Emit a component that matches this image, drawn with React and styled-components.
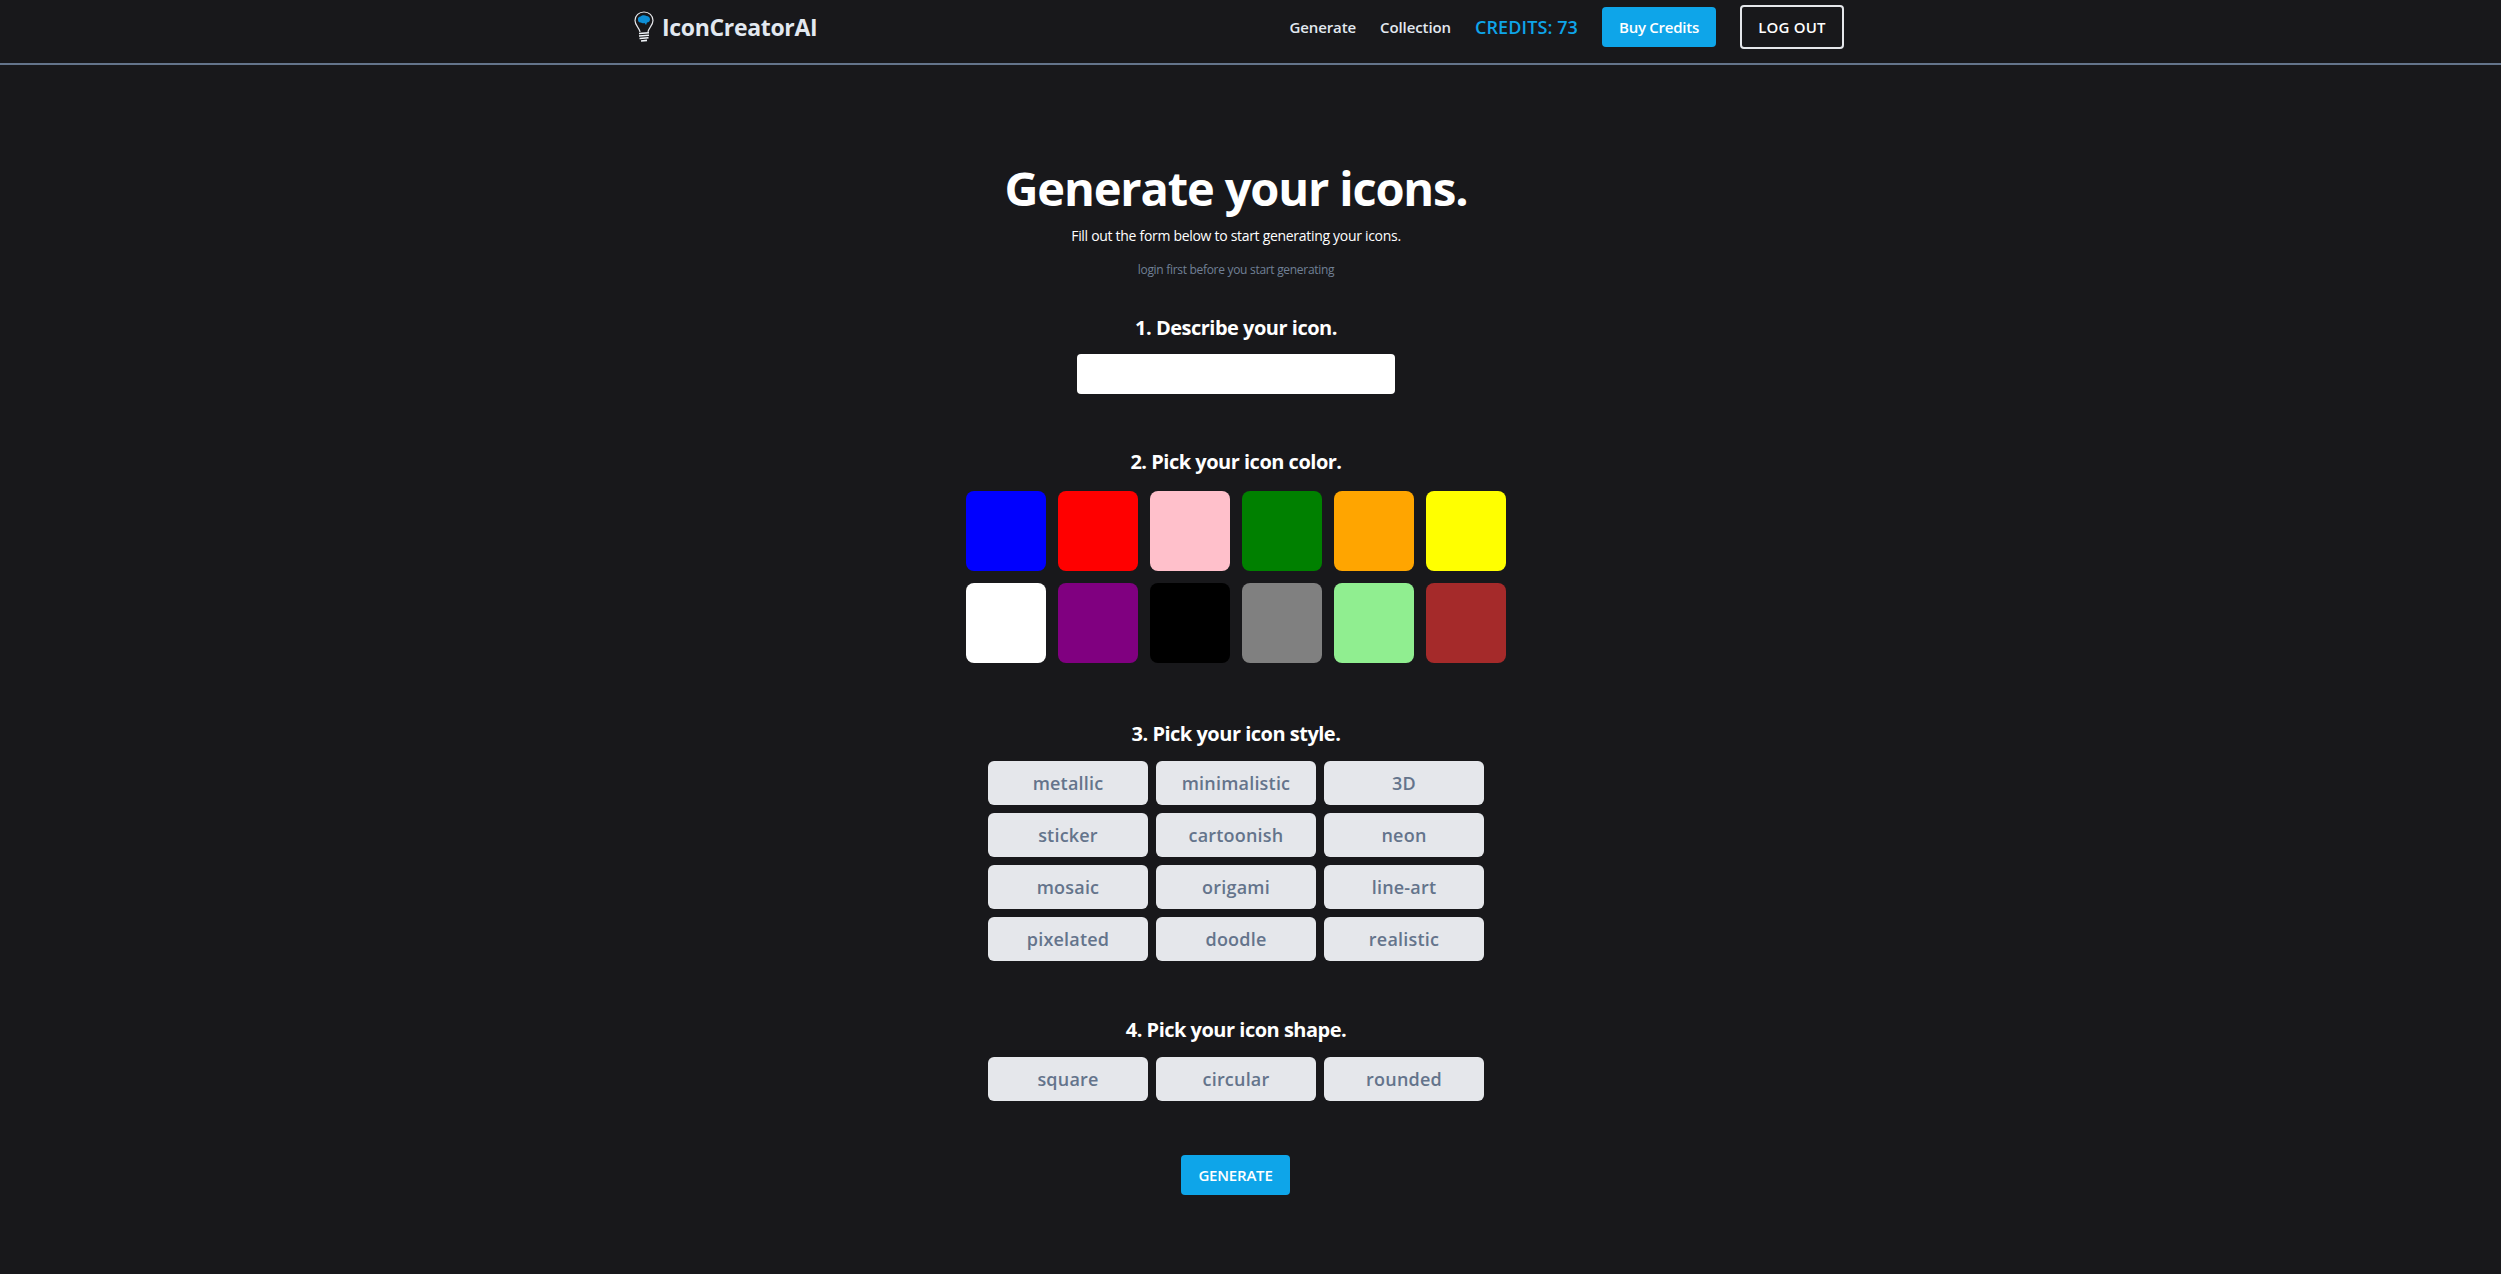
import React from "react";
import styled, { createGlobalStyle } from "styled-components";

const Global = createGlobalStyle`
  html, body { margin: 0; padding: 0; background: #18181b; }
  * { box-sizing: border-box; }
  body { font-family: "Open Sans", "Noto Sans", sans-serif; color: #fff; }
`;
const Page = styled.div`
  min-height: 1274px;
  background: #18181b;
  display: flex;
  flex-direction: column;
`;
const Header = styled.header`
  height: 65px;
  border-bottom: 2px solid #64748b;
  padding: 0 25px 9px 0;
`;
const HeaderInner = styled.div`
  width: 1212px;
  height: 100%;
  margin: 0 auto;
  display: flex;
  align-items: center;
  justify-content: space-between;
`;
const Logo = styled.div`
  display: flex;
  align-items: center;
  gap: 8px;
  padding-left: 2px;
  font-size: 23px;
  font-weight: 700;
  color: #e2e8f0;
  letter-spacing: -0.33px;
`;
const Nav = styled.nav`
  display: flex;
  align-items: center;
`;
const NavLink = styled.a`
  font-size: 15px;
  font-weight: 600;
  color: #e2e8f0;
  margin-right: 24px;
  letter-spacing: -0.1px;
`;
const Credits = styled.span`
  font-size: 18px;
  font-weight: 600;
  color: #0ea5e9;
  margin-right: 24px;
  letter-spacing: 0.1px;
`;
const BuyButton = styled.button`
  width: 114px;
  height: 40px;
  border: 0;
  border-radius: 4px;
  background: #0ea5e9;
  color: #fff;
  font: 600 15px "Open Sans", sans-serif;
  letter-spacing: -0.25px;
  margin-right: 24px;
`;
const LogoutButton = styled.button`
  width: 104px;
  height: 44px;
  border: 2px solid #e5e7eb;
  border-radius: 4px;
  background: transparent;
  color: #fff;
  font: 600 15px "Open Sans", sans-serif;
  letter-spacing: 0.2px;
`;
const Main = styled.main`
  padding: 93px 29px 0 0;
  display: flex;
  flex-direction: column;
  align-items: center;
`;
const Title = styled.h1`
  margin: 0;
  font-size: 47px;
  line-height: 60px;
  font-weight: 700;
  letter-spacing: -1.15px;
`;
const Sub = styled.p`
  margin: 8px 0 0;
  font-size: 14px;
  line-height: 20px;
  letter-spacing: -0.3px;
`;
const Hint = styled.p`
  margin: 14px 0 0;
  font-size: 12px;
  line-height: 20px;
  color: #718096;
  letter-spacing: -0.3px;
`;
const Label = styled.h2`
  margin: ${(p) => p.$top}px 0 0;
  font-size: 20px;
  line-height: 28px;
  font-weight: 700;
  letter-spacing: -0.5px;
`;
const TextField = styled.input`
  display: block;
  width: 318px;
  height: 40px;
  margin-top: 12px;
  border: 0;
  border-radius: 4px;
  background: #fff;
`;
const Swatches = styled.div`
  margin-top: 15px;
  display: grid;
  grid-template-columns: repeat(6, 80px);
  gap: 12px;
`;
const Swatch = styled.button`
  width: 80px;
  height: 80px;
  border: 0;
  border-radius: 8px;
  background: ${(p) => p.$color};
`;
const Options = styled.div`
  margin-top: 13px;
  display: grid;
  grid-template-columns: repeat(3, 160px);
  gap: 8px;
`;
const Option = styled.button`
  height: 44px;
  border: 0;
  border-radius: 6px;
  background: #e5e7eb;
  color: #64748b;
  font: 600 18px "Open Sans", sans-serif;
  letter-spacing: 0.2px;
`;
const GenerateButton = styled.button`
  margin: 54px 1px 0 0;
  width: 109px;
  height: 40px;
  border: 0;
  border-radius: 4px;
  background: #0ea5e9;
  color: #fff;
  font: 600 15px "Open Sans", sans-serif;
  letter-spacing: -0.2px;
`;

const BulbIcon = () => (
  <svg width="20" height="32" viewBox="0 0 20 32" fill="none">
    <path d="M6 21C5.500 17 1 14.500 1 9.500C1 4.500 5 1 10 1s9 3.500 9 8.500c0 5-4.500 7.500-5 11.500" stroke="#e5e7eb" strokeWidth="1.200" />
    <path d="M4 9c-.5-2 1-3.500 2.500-3.500C8 4 11 4 12.500 5c2 0 3.500 1.500 3.500 3.500 0 2-1.500 3-3 3l-1 2.500-1.500-2c-2 .5-3 0-3.500-.5C5.500 11.500 4 11 4 9z" fill="#0e8fd6" />
    <path d="M5 22.500l10-.8M5 25l10-.8M5.500 27.500l9-.8M7 30l6-.6" stroke="#f1f5f9" strokeWidth="1.600" />
  </svg>
);

const colors = ["blue", "red", "pink", "green", "orange", "yellow", "white", "purple", "black", "gray", "lightgreen", "brown"];
const styles = ["metallic", "minimalistic", "3D", "sticker", "cartoonish", "neon", "mosaic", "origami", "line-art", "pixelated", "doodle", "realistic"];
const shapes = ["square", "circular", "rounded"];

export default function App() {
  return (
    <Page>
      <Global />
      <Header>
        <HeaderInner>
          <Logo>
            <BulbIcon />
            IconCreatorAI
          </Logo>
          <Nav>
            <NavLink>Generate</NavLink>
            <NavLink>Collection</NavLink>
            <Credits>CREDITS: 73</Credits>
            <BuyButton>Buy Credits</BuyButton>
            <LogoutButton>LOG OUT</LogoutButton>
          </Nav>
        </HeaderInner>
      </Header>
      <Main>
        <Title>Generate your icons.</Title>
        <Sub>Fill out the form below to start generating your icons.</Sub>
        <Hint>login first before you start generating</Hint>
        <Label $top={34}>1. Describe your icon.</Label>
        <TextField />
        <Label $top={54}>2. Pick your icon color.</Label>
        <Swatches>
          {colors.map((c) => (
            <Swatch key={c} $color={c} />
          ))}
        </Swatches>
        <Label $top={57}>3. Pick your icon style.</Label>
        <Options>
          {styles.map((s) => (
            <Option key={s}>{s}</Option>
          ))}
        </Options>
        <Label $top={55}>4. Pick your icon shape.</Label>
        <Options>
          {shapes.map((s) => (
            <Option key={s}>{s}</Option>
          ))}
        </Options>
        <GenerateButton>GENERATE</GenerateButton>
      </Main>
    </Page>
  );
}
